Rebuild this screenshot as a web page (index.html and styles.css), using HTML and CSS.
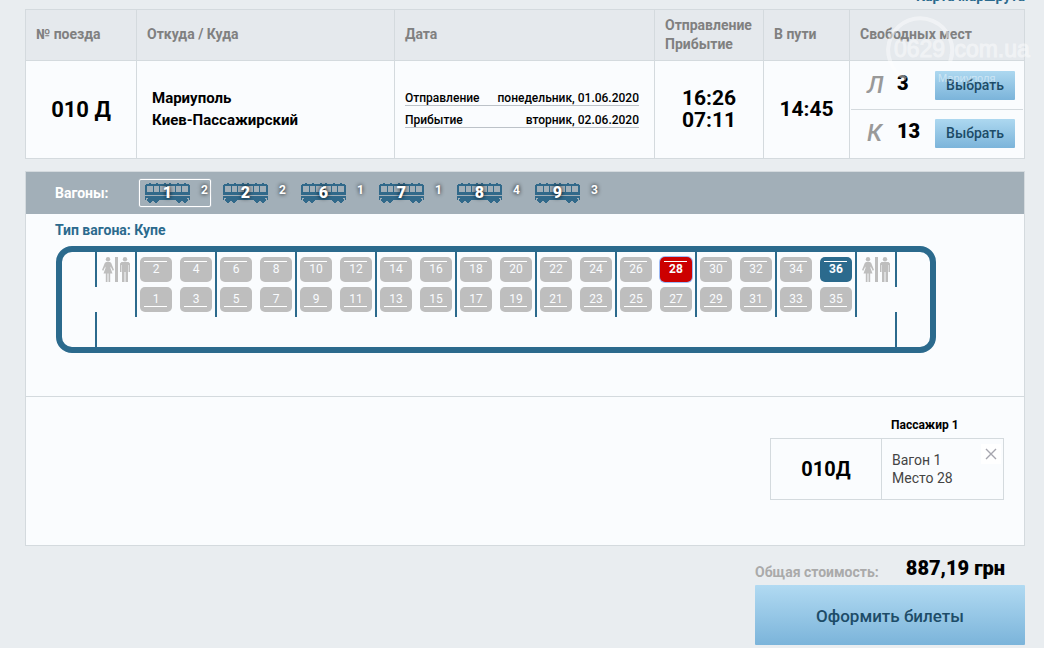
FILE: index.html
```
<!DOCTYPE html>
<html lang="ru">
<head>
<meta charset="utf-8">
<title>Выбор мест</title>
<link rel="stylesheet" href="styles.css">
</head>
<body>
<svg class="defs" aria-hidden="true">
  <symbol id="coach" viewBox="0 0 45 20">
    <path d="M4 0h2v1h5V0h2v1h6V0h2v1h3V0h2v1h6V0h2v1h5V0h2v1h3v1h1v10H0V2h1V1h3zM2 3v6h6V3zM9 3v6h5V3zM15 3v6h6V3zM22 3v6h1V3zM24 3v6h6V3zM31 3v6h5V3zM37 3v6h6V3z" fill-rule="evenodd"/>
    <path d="M0 13h45v4h-1v-2h-2v1h1v2h-1v1h-1v1h-2v-1h-1v-1h-2v1h-1v1h-2v-1h-1v-1h-1v-1H14v1h-1v1h-1v1h-2v-1H9v-1H7v1H6v1H4v-1H3v-1H2v-2h1v-1H1v2H0z"/>
  </symbol>
  <symbol id="wc" viewBox="0 0 28 25">
    <circle cx="6" cy="2.2" r="2.2"/>
    <path d="M4 5h4l1.200 1L12 13l-1.300.800L8.700 9.500 8.500 11l2 5.500H8.200V25H6.500v-8.500h-1V25H3.800v-8.500H1.500l2-5.500-.200-1.500L1.300 13.800 0 13l2.800-7z"/>
    <path d="M13 0h3v25h-3z"/>
    <circle cx="23" cy="2.200" r="2.200"/>
    <path d="M19.500 5h7L28 6.500V15h-1.500V8H26v17h-2.500V15h-1v10H20V8h-.500v7H18V6.500z"/>
  </symbol>
</svg>

<main class="page">
  <div class="route"><a class="route-link" href="#">Карта маршрута</a></div>

  <table class="trains">
    <thead>
      <tr>
        <th class="col-number">№ поезда</th>
        <th>Откуда / Куда</th>
        <th class="col-date">Дата</th>
        <th class="col-time">Отправление Прибытие</th>
        <th class="col-length">В пути</th>
        <th class="col-free">Свободных мест</th>
      </tr>
    </thead>
    <tbody>
      <tr>
        <td class="number">010 Д</td>
        <td class="stations">Мариуполь<br>Киев-Пассажирский</td>
        <td class="dates">
          <div class="date"><span>Отправление</span><span>понедельник, 01.06.2020</span></div>
          <div class="date"><span>Прибытие</span><span>вторник, 02.06.2020</span></div>
        </td>
        <td class="times">16:26<br>07:11</td>
        <td class="length">14:45</td>
        <td class="free">
          <div class="free-row"><i class="kind">Л</i><b class="count">3</b><button class="choose">Выбрать</button></div>
          <div class="free-row"><i class="kind">К</i><b class="count">13</b><button class="choose">Выбрать</button></div>
        </td>
      </tr>
    </tbody>
  </table>

  <section class="panel">
    <div class="wagons">
      <span class="wagons-label">Вагоны:</span>
      <button class="wagon selected"><span class="car"><svg><use href="#coach"/></svg><b>1</b></span><span class="left">2</span></button>
      <button class="wagon"><span class="car"><svg><use href="#coach"/></svg><b>2</b></span><span class="left">2</span></button>
      <button class="wagon"><span class="car"><svg><use href="#coach"/></svg><b>6</b></span><span class="left">1</span></button>
      <button class="wagon"><span class="car"><svg><use href="#coach"/></svg><b>7</b></span><span class="left">1</span></button>
      <button class="wagon"><span class="car"><svg><use href="#coach"/></svg><b>8</b></span><span class="left">4</span></button>
      <button class="wagon"><span class="car"><svg><use href="#coach"/></svg><b>9</b></span><span class="left">3</span></button>
    </div>

    <div class="scheme">
      <h2 class="type">Тип вагона: Купе</h2>
      <div class="coach">
        <div class="vestibule"></div>
        <div class="wc doorway"><svg><use href="#wc"/></svg></div>
        <div class="room"><button class="seat">2</button><button class="seat">1</button><button class="seat">4</button><button class="seat">3</button></div>
        <div class="room"><button class="seat">6</button><button class="seat">5</button><button class="seat">8</button><button class="seat">7</button></div>
        <div class="room"><button class="seat">10</button><button class="seat">9</button><button class="seat">12</button><button class="seat">11</button></div>
        <div class="room"><button class="seat">14</button><button class="seat">13</button><button class="seat">16</button><button class="seat">15</button></div>
        <div class="room"><button class="seat">18</button><button class="seat">17</button><button class="seat">20</button><button class="seat">19</button></div>
        <div class="room"><button class="seat">22</button><button class="seat">21</button><button class="seat">24</button><button class="seat">23</button></div>
        <div class="room"><button class="seat">26</button><button class="seat">25</button><button class="seat chosen">28</button><button class="seat">27</button></div>
        <div class="room"><button class="seat">30</button><button class="seat">29</button><button class="seat">32</button><button class="seat">31</button></div>
        <div class="room"><button class="seat">34</button><button class="seat">33</button><button class="seat open">36</button><button class="seat">35</button></div>
        <div class="wc wall"><svg><use href="#wc"/></svg></div>
        <div class="vestibule doorway"></div>
      </div>
    </div>

    <div class="passengers">
      <div class="passenger">
        <h3 class="passenger-title">Пассажир 1</h3>
        <div class="ticket">
          <div class="ticket-train">010Д</div>
          <div class="ticket-place">
            <div>Вагон 1<br>Место 28</div>
            <button class="remove" aria-label="Удалить"><svg viewBox="0 0 10 10"><path d="M0 0l10 10M10 0L0 10"/></svg></button>
          </div>
        </div>
      </div>
    </div>
  </section>

  <div class="checkout">
    <div class="total"><span class="total-label">Общая стоимость:</span><b class="total-sum">887,19 грн</b></div>
    <button class="order">Оформить билеты</button>
  </div>
</main>

<svg class="watermark" viewBox="0 0 146 72" aria-hidden="true">
  <path d="M64 46A32 32 0 1 0 20 63"/>
  <text class="mark-name" x="8" y="41">0629</text>
  <text class="mark-name" x="62" y="41">.com.ua</text>
  <text class="mark-city" x="52" y="66">Мариуполя</text>
</svg>
</body>
</html>
```
FILE: styles.css
```
* { box-sizing: border-box; }

body {
  margin: 0;
  background: #e9edf0;
  color: #000;
  font: 700 14px/18px Roboto, "Liberation Sans", sans-serif;
  overflow: hidden;
}

button {
  margin: 0;
  padding: 0;
  border: 0;
  font: inherit;
  cursor: pointer;
}

.defs { display: none; }
.page { padding: 0 19px 0 25px; }

.route { margin-top: -13px; height: 22px; text-align: right; }
.route-link { color: #2b6a8d; text-decoration: none; }

.trains {
  width: 100%;
  border-collapse: collapse;
  table-layout: fixed;
  background: #fafcfe;
}
.trains th, .trains td { border: 1px solid #d4dade; }
.trains th {
  height: 51px;
  padding: 0 9px 1px 10px;
  background: #e5e9ed;
  color: #808080;
  line-height: 19px;
  text-align: left;
}
.trains td { padding: 0 0 2px; }
.col-number { width: 111px; }
.col-date { width: 260px; }
.col-time { width: 109px; }
.col-length { width: 86px; }
.col-free { width: 175px; }
.trains .number { padding: 0; font-size: 22px; text-align: center; }
.trains .stations { padding-left: 15px; font-size: 15px; line-height: 22px; }
.trains .dates { padding: 0 15px 2px 10px; font-size: 12px; font-weight: 500; }
.trains .free { padding: 0; }
.date {
  display: flex;
  justify-content: space-between;
  height: 16px;
  margin: 6px 0;
  border-bottom: 1px solid #bcc2c8;
  line-height: 16px;
}
.times, .length { font-size: 21px; line-height: 22px; text-align: center; }
.free-row {
  display: grid;
  grid-template-columns: 30px 1fr 80px;
  align-items: center;
  height: 48px;
  margin: 0 1px;
  padding: 0 8px 0 16px;
}
.free-row + .free-row { height: 49px; padding-bottom: 2px; border-top: 1px solid #d4dade; }
.kind { color: #999; font-size: 24px; font-weight: 500; }
.count { padding-bottom: 4px; font-size: 20px; }
.choose {
  height: 29px;
  border-radius: 1px;
  background: linear-gradient(#add8f0, #7bb4da);
  color: #1d4c68;
  font-weight: 500;
}

.panel {
  margin-top: 12px;
  border: 1px solid #d4dade;
  background: #fafcfe;
}
.wagons {
  display: flex;
  align-items: center;
  gap: 6px;
  height: 42px;
  padding-left: 29px;
  background: #a2afb8;
  color: #fff;
}
.wagons-label { width: 78px; }
.wagon {
  display: flex;
  gap: 11px;
  width: 72px;
  height: 28px;
  padding: 3px 0 0 5px;
  border: 1px solid transparent;
  border-radius: 2px;
  background: none;
  color: #fff;
  text-shadow: 0 0 4px #000;
}
.wagon.selected { border-color: #fff; box-shadow: 0 0 1px #fff; }
.car { display: grid; height: 20px; place-items: center; }
.car > * { grid-area: 1 / 1; }
.car svg { width: 45px; height: 20px; fill: #31698a; shape-rendering: crispEdges; }
.car b { font-size: 16px; }
.left { font-size: 12px; line-height: 14px; }

.scheme { padding: 7px 29px 43px; border-bottom: 1px solid #d4dade; }
.type { margin: 0 0 7px; color: #2b6a8d; font-size: 14px; }
.coach {
  display: flex;
  width: max-content;
  height: 107px;
  margin-left: 1px;
  border: 6px solid #2b6a8d;
  border-radius: 16px;
}
.vestibule { width: 33px; }
.vestibule.doorway { width: 35px; }
.doorway {
  background: linear-gradient(#2b6a8d 35px, transparent 35px 60px, #2b6a8d 60px) no-repeat 0 0 / 2px 100%;
}
.wc { width: 40px; padding: 5px 0 0 7px; }
.wc svg { display: block; width: 28px; height: 25px; fill: #bebebe; }
.room, .wall { height: 65px; border-left: 2px solid #2b6a8d; }
.wc.wall { padding-left: 5px; }
.room {
  display: grid;
  grid: 25px 25px / auto-flow 32px;
  gap: 5px 8px;
  width: 80px;
  padding: 5px 0 0 3px;
}
.seat {
  padding-bottom: 2px;
  border-radius: 5px;
  background: #bebebe linear-gradient(#fff, #fff) no-repeat 4px 4px / 23px 1px;
  color: #fafcfe;
  font-size: 12px;
  font-weight: 400;
  line-height: 22px;
}
.seat:nth-child(even) { background-position: 4px 19px; }
.seat.open { background-color: #2b6a8d; font-weight: 700; }
.seat.chosen { background-color: #c00; box-shadow: 0 0 0 1px #9cb8f4; font-weight: 700; }

.passengers {
  display: flex;
  justify-content: flex-end;
  padding: 19px 20px 45px;
}
.passenger { width: 234px; }
.passenger-title { margin: 0 0 4px 121px; font-size: 12px; }
.ticket { display: flex; height: 62px; border: 1px solid #d4dade; }
.ticket-train { width: 110px; font-size: 20px; line-height: 60px; text-align: center; }
.ticket-place {
  display: flex;
  flex: 1;
  justify-content: space-between;
  padding: 12px 2px 0 10px;
  border-left: 1px solid #d4dade;
  color: #444;
  font-weight: 400;
}
.remove {
  display: grid;
  place-items: center;
  width: 20px;
  height: 20px;
  margin-top: -7px;
  background: #fff;
}
.remove svg { width: 10px; height: 10px; overflow: visible; stroke: #a5a5ae; stroke-width: 1.4; }

.checkout { width: 270px; margin: 10px 0 0 auto; }
.total {
  display: flex;
  justify-content: space-between;
  height: 29px;
  padding-right: 20px;
  line-height: 24px;
}
.total-label { padding-top: 4px; color: #aaa; }
.total-sum { font-size: 20px; }
.order {
  width: 100%;
  height: 60px;
  padding-top: 2px;
  border-radius: 1px;
  background: linear-gradient(#b1daf2, #7bb4da);
  color: #1d4c68;
  font-size: 17px;
  font-weight: 500;
}

.watermark {
  position: absolute;
  top: 16px;
  right: 12px;
  width: 146px;
  height: 72px;
  pointer-events: none;
  overflow: visible;
  opacity: .45;
}
.watermark path { fill: none; stroke: #fff; stroke-width: 4; }
.watermark text { fill: #fff; font-family: "Liberation Sans", sans-serif; font-weight: 400; }
.watermark .mark-name { font-size: 23px; stroke: #fff; }
.watermark .mark-city { font-size: 11px; }
```
